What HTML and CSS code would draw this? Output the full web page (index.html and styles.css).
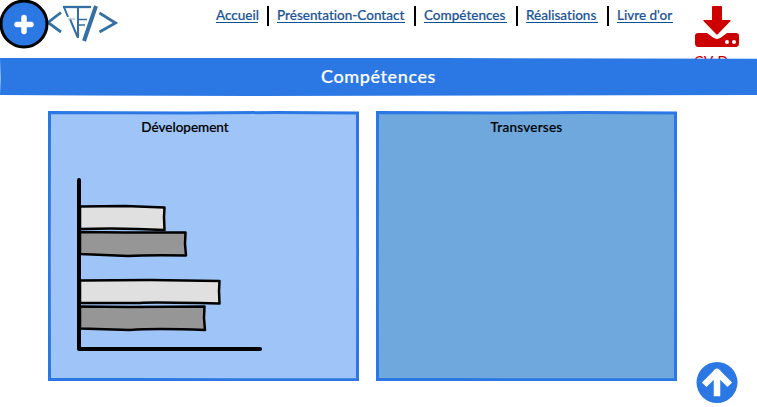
FILE: index.html
```html
<!DOCTYPE html>
<html lang="fr">
<head>
<meta charset="utf-8">
<title>Compétences</title>
<link rel="stylesheet" href="styles.css">
</head>
<body>
<header class="header">
  <svg class="add" viewBox="0 0 48 48"><circle cx="24" cy="24" r="23" fill="#2b78e4" stroke="#000" stroke-width="3"/><path d="M24 17.500v14M17 24.500h14" stroke="#fff" stroke-width="5.500" stroke-linecap="round"/></svg>
  <svg class="logo" viewBox="0 0 72 48" fill="none" stroke="#3470a3"><path d="M11 12.500L-2 22.500L11 32" stroke-width="2.800"/><path d="M13 7H41" stroke-width="2.300"/><path d="M14 7L18 17M20 19L27.500 37" stroke-width="2"/><path d="M28 7V38" stroke-width="2"/><path d="M18 19H25" stroke="#9dbbd3" stroke-width="1.200"/><path d="M28 19.500H37M28 25H35" stroke-width="1.700"/><path d="M46 6L34 41" stroke-width="4"/><path d="M49.500 13L65.500 23L49.500 32" stroke-width="2.800"/></svg>
  <nav class="nav">
    <a class="link home" href="#">Accueil</a>
    <a class="link contact" href="#">Présentation-Contact</a>
    <a class="link skills" href="#">Compétences</a>
    <a class="link works" href="#">Réalisations</a>
    <a class="link guest" href="#">Livre d'or</a>
  </nav>
  <a class="download" href="#">
    <svg viewBox="0 0 46 48" width="46" height="48"><path d="M4 33H13L17 36Q23 42 29 36L33 33H42Q45 33 45 36V43Q45 47 42 47H4Q1 47 1 43V36Q1 33 4 33Z" fill="#c00"/><path d="M18 7Q18 6 19 6H27Q28 6 28 7V20H36Q37 20 36.500 21L24 34Q23 35 22 34L9.500 21Q9 20 10 20H18Z" fill="#c00"/><circle cx="33" cy="42" r="2" fill="#fff"/><circle cx="40" cy="42" r="2" fill="#fff"/></svg>
    <span class="download-label">CV D</span>
  </a>
</header>
<div class="banner">
  <svg class="sketch" viewBox="0 0 757 38" fill="#2b78e4"><path d="M0 0L440 0L757 .7L757 37L500 37.500L250 38L90 37.500L0 37L.5 20Z"/></svg>
  <h1 class="title">Compétences</h1>
</div>
<main class="panels">
  <section class="panel dev">
    <svg class="sketch" viewBox="0 0 311 270"><path d="M1.500 1.500L140 2L230 1.500L309.500 2L309.700 140L309.500 268.500L190 268.800L80 268.500L1.500 268.500L1.200 140Z" fill="#9fc5f8" stroke="#2b78e4" stroke-width="3"/></svg>
    <h2 class="subtitle"><span class="dev-text">Dévelopement</span></h2>
    <svg class="chart" viewBox="75 175 190 180" stroke="#000" stroke-width="2.500" stroke-linejoin="round">
      <path d="M80 206.500L125 206L164.500 207.500L164 217L164.500 230Q120 227.500 80 229Z" fill="#e0e0e0"/>
      <path d="M80 232L125 232.500L185.500 232.500L185 244L186 255.500Q145 255 128 256L80 254Z" fill="#969696"/>
      <path d="M80 280.500L150 280L219.500 281L219 291L219.500 303.500Q150 302 140 303L80 303Z" fill="#e0e0e0"/>
      <path d="M80 306.500L130 307L204.500 306.500L204 318L205 330Q155 328 130 330L80 328.500Z" fill="#969696"/>
      <path d="M79 180V349H260" fill="none" stroke-width="4" stroke-linecap="round"/>
    </svg>
  </section>
  <section class="panel cross">
    <svg class="sketch" viewBox="0 0 301 270"><path d="M1.500 1.500L120 2L210 1.500L299.500 2L299.700 140L299.500 268.500L180 268.800L80 268.500L1.500 268.500L1.200 140Z" fill="#6fa8dc" stroke="#2b78e4" stroke-width="3"/></svg>
    <h2 class="subtitle"><span class="cross-text">Transverses</span></h2>
  </section>
</main>
<a class="to-top" href="#"><svg viewBox="0 0 42 42" width="42" height="42"><circle cx="21" cy="20.500" r="20.500" fill="#2b78e4"/><path d="M21 31V11M10.500 20.500L21 10L31.500 20.500" fill="none" stroke="#fff" stroke-width="6.500" stroke-linecap="square" stroke-linejoin="round"/></svg></a>
</body>
</html>
```
FILE: styles.css
```css
* { box-sizing: border-box; }
body { margin: 0; height: 407px; overflow: hidden; background: #fff; color: #000; font: 500 13.5px Lato, sans-serif; font-variant-ligatures: none; }
svg { display: block; }
.header { display: flex; height: 58px; }
.add { position: relative; z-index: 1; width: 48px; height: 48px; overflow: visible; flex: none; }
.logo { width: 72px; height: 48px; overflow: visible; flex: none; margin-left: 2px; }
.nav { display: flex; margin-left: 94px; padding-top: 7px; gap: 19px; }
.link { position: relative; height: 16px; line-height: 16px; border-bottom: 1px solid #0b5394; color: #1c5597; text-decoration: none; white-space: nowrap; -webkit-text-stroke: .2px; }
.link + .link::before { content: ""; position: absolute; left: -10px; top: -1px; width: 2px; height: 20px; background: #000; }
.home { width: 42px; }
.contact { width: 128px; }
.skills { width: 83px; }
.works { width: 72px; }
.guest { width: 56px; }
.download { height: 58px; margin-left: 21px; color: #c00; text-decoration: none; }
.download-label { display: block; margin-top: 4px; line-height: 18px; letter-spacing: .5px; font-size: 14px; }
.banner { position: relative; height: 38px; }
.sketch { position: absolute; inset: 0; width: 100%; height: 100%; }
.title { position: relative; margin: 0; text-align: center; color: #fff; font-size: 18px; line-height: 36px; letter-spacing: .6px; font-weight: 500; -webkit-text-stroke: .2px; }
.panels { display: flex; gap: 17px; padding: 15px 0 0 48px; }
.panel { position: relative; height: 270px; }
.dev { width: 311px; }
.cross { width: 301px; }
.subtitle { position: relative; margin: 0; padding-top: 8px; font-size: 13.5px; line-height: 16px; font-weight: 500; text-align: center; -webkit-text-stroke: .2px; }
.dev .subtitle { padding-right: 37px; }
.cross .subtitle { letter-spacing: .25px; }
.chart { position: relative; width: 190px; height: 180px; margin: 40px 0 0 27px; }
.to-top { position: absolute; left: 696px; top: 362px; }
```
